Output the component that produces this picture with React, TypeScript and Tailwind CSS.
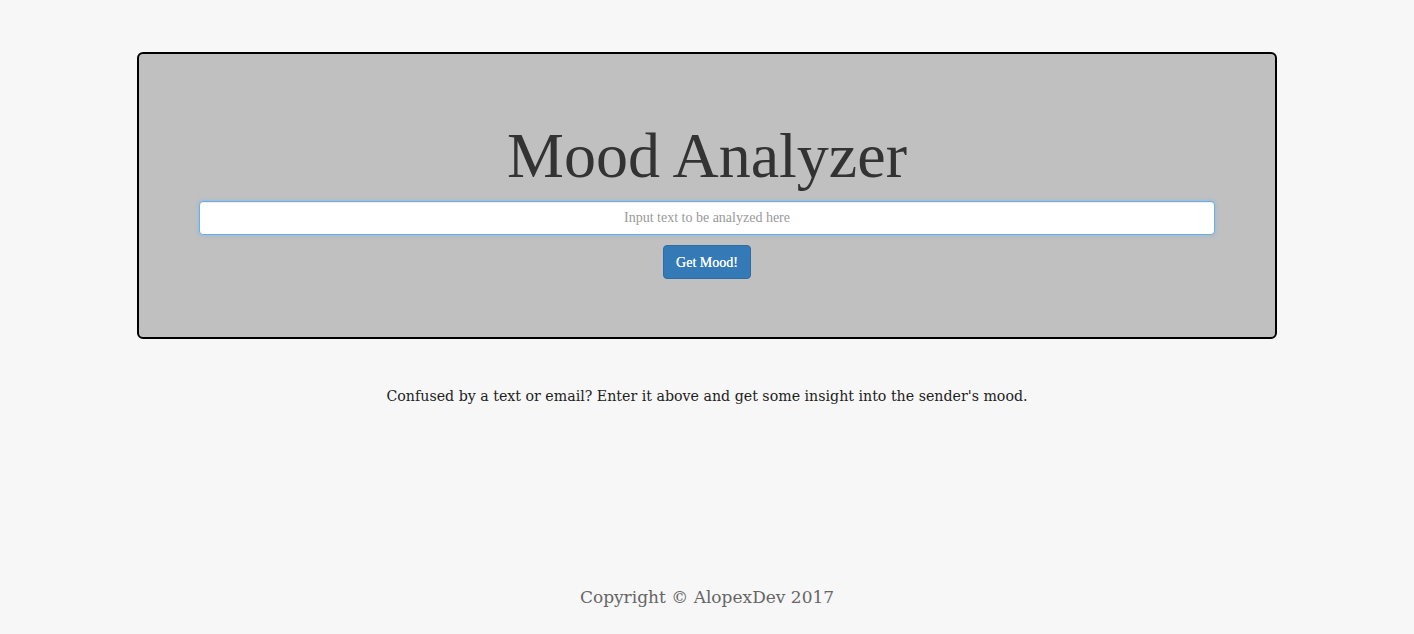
export default function App() {
  return (
    <div className="min-h-[634px] bg-[#f7f7f7] flex flex-col items-center font-['DejaVu_Serif',serif]">
      <div className="mt-[52px] w-[1140px] h-[287px] rounded-[6px] border-2 border-black bg-[#c0c0c0] flex flex-col items-center">
        <h1 className="mt-[64px] text-[64px] leading-[76px] text-[#333] font-['Liberation_Serif',serif]">Mood Analyzer</h1>
        <input
          type="text"
          placeholder="Input text to be analyzed here"
          className="mt-[7px] w-[1016px] h-[34px] rounded-[4px] border border-[#66afe9] bg-white text-center text-[14px] font-['Liberation_Serif',serif] placeholder:text-[#999] shadow-[inset_0_1px_1px_rgba(0,0,0,0.075),0_0_4px_rgba(102,175,233,0.5)] outline-none"
        />
        <button
          type="button"
          className="mt-[10px] h-[34px] px-[12px] rounded-[4px] border border-[#2e6da4] bg-[#337ab7] text-white text-[14px] font-['Liberation_Serif',serif] [text-shadow:0_0_0.4px_#fff]"
        >
          Get Mood!
        </button>
      </div>
      <p className="mt-[46px] text-[14.2px] leading-[22px] text-[#222]">
        Confused by a text or email? Enter it above and get some insight into the sender's mood.
      </p>
      <footer className="mt-[177px] text-[17px] leading-[26px] text-[#666]">Copyright © AlopexDev 2017</footer>
    </div>
  );
}
